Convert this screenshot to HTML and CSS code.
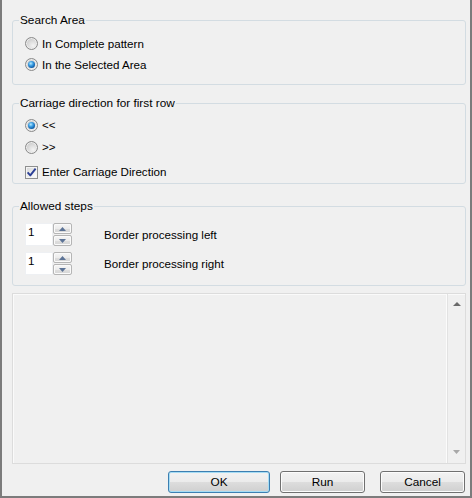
FILE: index.html
```html
<!DOCTYPE html>
<html>
<head>
<meta charset="utf-8">
<link rel="stylesheet" href="styles.css">
</head>
<body>
<div class="window">
  <fieldset class="group g1">
    <legend>Search Area</legend>
    <label class="opt"><span class="radio"></span>In Complete pattern</label>
    <label class="opt"><span class="radio on"></span>In the Selected Area</label>
  </fieldset>

  <fieldset class="group g2">
    <legend>Carriage direction for first row</legend>
    <label class="opt r-a"><span class="radio on"></span>&lt;&lt;</label>
    <label class="opt r-b"><span class="radio"></span>&gt;&gt;</label>
    <label class="opt r-c"><span class="check"><svg width="11" height="11" viewBox="0 0 11 11"><path d="M1.6 5.4 L4.3 8.4 L9.6 1.6" fill="none" stroke="#2b3f96" stroke-width="1.9" stroke-linejoin="round"/></svg></span>Enter Carriage Direction</label>
  </fieldset>

  <fieldset class="group g3">
    <legend>Allowed steps</legend>
    <div class="spinrow">
      <div class="spin">
        <div class="spin-text">1</div>
        <div class="spin-btns">
          <div class="sb"><svg width="7" height="4" viewBox="0 0 7 4"><path d="M0 4 L3.5 0 L7 4 Z" fill="#5c7396"/></svg></div>
          <div class="sb"><svg width="7" height="4" viewBox="0 0 7 4"><path d="M0 0 L7 0 L3.5 4 Z" fill="#5c7396"/></svg></div>
        </div>
      </div>
      <span class="spin-label">Border processing left</span>
    </div>
    <div class="spinrow second">
      <div class="spin">
        <div class="spin-text">1</div>
        <div class="spin-btns">
          <div class="sb"><svg width="7" height="4" viewBox="0 0 7 4"><path d="M0 4 L3.5 0 L7 4 Z" fill="#5c7396"/></svg></div>
          <div class="sb"><svg width="7" height="4" viewBox="0 0 7 4"><path d="M0 0 L7 0 L3.5 4 Z" fill="#5c7396"/></svg></div>
        </div>
      </div>
      <span class="spin-label">Border processing right</span>
    </div>
  </fieldset>

  <div class="memo">
    <div class="memo-body"></div>
    <div class="vscroll">
      <svg width="8" height="4" viewBox="0 0 8 4"><path d="M0 4 L4 0 L8 4 Z" fill="#6a6a6a"/></svg>
      <svg width="7" height="4" viewBox="0 0 7 4"><path d="M0 0 L7 0 L3.5 4 Z" fill="#a8a8a8"/></svg>
    </div>
  </div>

  <div class="buttons">
    <button class="btn default ok">OK</button>
    <button class="btn run">Run</button>
    <button class="btn cancel">Cancel</button>
  </div>
</div>
</body>
</html>
```

FILE: styles.css
```css
html, body {
  margin: 0;
  padding: 0;
  background: #f0f0f0;
}

body {
  font-family: "Liberation Sans", Arial, sans-serif;
  font-size: 11.6px;
  color: #000;
}

.window {
  width: 472px;
  height: 498px;
  box-sizing: border-box;
  border: 2px solid #7c7c7c;
  border-top: 0;
  background: #f0f0f0;
  padding: 13px 4px 0 10px;
  display: flex;
  flex-direction: column;
}

.group {
  margin: 0;
  padding: 0 0 0 12px;
  border: 1px solid #d3dce2;
  border-radius: 3px;
  min-width: 0;
}

.group legend {
  margin-left: -6px;
  padding: 0 1px;
  line-height: 14px;
  font-size: 11.8px;
}

.g1 {
  padding-top: 6px;
  padding-bottom: 9px;
  margin-bottom: 11px;
}

.g2 {
  padding-top: 5px;
  padding-bottom: 1px;
  margin-bottom: 15px;
}

.g3 {
  padding-top: 10px;
  padding-bottom: 10px;
}

.opt {
  display: flex;
  align-items: center;
  gap: 4px;
  height: 21px;
  line-height: 14px;
}

.g2 .opt {
  height: 20px;
}

.g2 .r-b {
  margin-top: 2px;
}

.g2 .r-c {
  margin-top: 5px;
}

.radio {
  width: 13px;
  height: 13px;
  box-sizing: border-box;
  border-radius: 50%;
  border: 1px solid #8a8a8a;
  background: radial-gradient(circle at 65% 70%, #f4f4f4 0%, #dcdcdc 45%, #bcbcbc 100%);
  box-shadow: inset 0 0 0 1px #ededed;
  display: flex;
  align-items: center;
  justify-content: center;
  flex: none;
}

.radio.on::after {
  content: "";
  width: 7px;
  height: 7px;
  border-radius: 50%;
  background: radial-gradient(circle at 40% 35%, #b9ecff 0%, #3ea0e4 35%, #0f5ea8 70%, #0b3c72 100%);
}

.check {
  width: 13px;
  height: 13px;
  box-sizing: border-box;
  border: 1px solid #8e8f8f;
  background: linear-gradient(135deg, #d4d5d6 0%, #efefef 60%, #ffffff 100%);
  box-shadow: inset 0 0 0 1px #f4f4f4;
  display: flex;
  align-items: center;
  justify-content: center;
  flex: none;
}

.spinrow {
  display: flex;
  align-items: center;
  height: 23px;
}

.spinrow.second {
  margin-top: 6px;
}

.spin {
  display: flex;
  width: 47px;
  height: 23px;
  flex: none;
}

.spin-text {
  width: 28px;
  box-sizing: border-box;
  background: #fff;
  border: 1px solid #eef0f3;
  padding: 0 0 0 2px;
  line-height: 16px;
}

.spin-btns {
  width: 19px;
  display: flex;
  flex-direction: column;
  gap: 1px;
}

.sb {
  flex: 1;
  box-sizing: border-box;
  border: 1px solid #b5b5b5;
  border-radius: 2px;
  background: linear-gradient(#f6f6f6 0%, #ececec 50%, #dedede 51%, #d6d6d6 100%);
  box-shadow: inset 0 0 0 1px #fafafa;
  display: flex;
  align-items: center;
  justify-content: center;
}

.spin-label {
  margin-left: 32px;
  line-height: 14px;
}

.memo {
  margin-top: 7px;
  height: 171px;
  box-sizing: border-box;
  border: 1px solid #dcdcdc;
  box-shadow: inset 1px 1px 0 #fafafa;
  background: #f0f0f0;
  display: flex;
}

.memo-body {
  flex: 1;
}

.vscroll {
  width: 17px;
  border-left: 1px solid #e2e2e2;
  box-shadow: -1px 0 0 #fbfbfb;
  display: flex;
  flex-direction: column;
  align-items: center;
  justify-content: space-between;
  padding: 8px 0 9px;
}

.buttons {
  margin-top: 7px;
  display: flex;
  justify-content: flex-end;
  padding-right: 1px;
}

.btn {
  height: 22px;
  box-sizing: border-box;
  border: 1px solid #707070;
  border-radius: 3px;
  background: linear-gradient(#f2f2f2 0%, #ebebeb 50%, #dddddd 51%, #cfcfcf 100%);
  box-shadow: inset 0 0 0 1px #fcfcfc;
  font-family: "Liberation Sans", Arial, sans-serif;
  font-size: 11.8px;
  color: #000;
  padding: 0;
  line-height: 18px;
}

.btn.default {
  border-color: #3c7fb1;
  box-shadow: inset 0 0 0 1px #a6dcf4;
}

.ok {
  width: 102px;
}

.run {
  width: 85px;
  margin-left: 10px;
}

.cancel {
  width: 85px;
  margin-left: 15px;
}
```
